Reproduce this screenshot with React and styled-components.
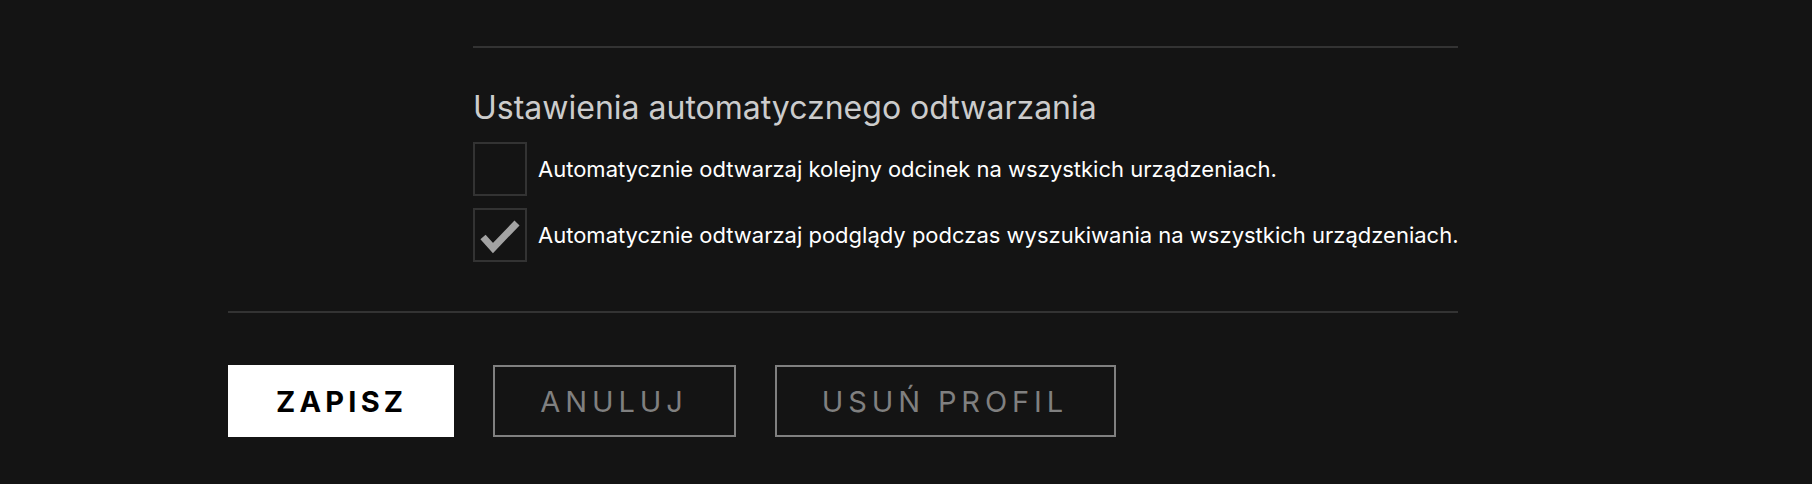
import React from "react";
import styled, { createGlobalStyle } from "styled-components";

const Global = createGlobalStyle`
  html, body { margin: 0; padding: 0; background: #141414; }
  body { font-family: Inter, "Noto Sans", sans-serif; color: #fff; }
`;

const Page = styled.div`
  width: 1812px;
  height: 484px;
  box-sizing: border-box;
  padding: 46px 0 0 228px;
  background: #141414;
`;

const Content = styled.div`
  width: 1230px;
`;

const Section = styled.section`
  margin-left: 245px;
  border-top: 2px solid #333;
  padding-top: 38px;
  padding-bottom: 49px;
`;

const Heading = styled.h2`
  margin: 0 0 12px;
  font-size: 32px;
  font-weight: 400;
  line-height: 44px;
  color: #ccc;
`;

const List = styled.div`
  display: flex;
  flex-direction: column;
  gap: 12px;
`;

const Row = styled.label`
  display: flex;
  align-items: center;
  gap: 11px;
`;

const Box = styled.span`
  width: 54px;
  height: 54px;
  box-sizing: border-box;
  border: 2px solid #333;
  display: flex;
  align-items: center;
  justify-content: center;
`;

const Label = styled.span`
  font-size: 22px;
  color: #fff;
  white-space: nowrap;
`;

const Divider = styled.hr`
  margin: 0;
  border: 0;
  border-top: 2px solid #333;
`;

const Buttons = styled.div`
  display: flex;
  gap: 39px;
  margin-top: 52px;
`;

const Button = styled.button`
  height: 72px;
  box-sizing: border-box;
  padding: ${(p) => (p.$primary ? "0 45px 0 46px" : "0 46px 0 45px")};
  font-family: Inter, "Noto Sans", sans-serif;
  font-size: 29px;
  line-height: 1;
  letter-spacing: ${(p) => (p.$primary ? 4.2 : 4.9)}px;
  text-transform: uppercase;
  font-weight: ${(p) => (p.$primary ? 700 : 400)};
  background: ${(p) => (p.$primary ? "#fff" : "transparent")};
  color: ${(p) => (p.$primary ? "#000" : "#808080")};
  border: 2px solid ${(p) => (p.$primary ? "#fff" : "#808080")};
`;

const Check = () => (
  <svg width="54" height="54" viewBox="0 0 54 54" style={{ margin: -2 }}>
    <polyline
      points="10,29 20,40 44,15"
      fill="none"
      stroke="#a3a3a3"
      strokeWidth="7"
      strokeLinejoin="miter"
    />
  </svg>
);

export default function App() {
  return (
    <>
      <Global />
      <Page>
        <Content>
          <Section>
            <Heading>Ustawienia automatycznego odtwarzania</Heading>
            <List>
              <Row>
                <Box />
                <Label>Automatycznie odtwarzaj kolejny odcinek na wszystkich urządzeniach.</Label>
              </Row>
              <Row>
                <Box>
                  <Check />
                </Box>
                <Label>Automatycznie odtwarzaj podglądy podczas wyszukiwania na wszystkich urządzeniach.</Label>
              </Row>
            </List>
          </Section>
          <Divider />
          <Buttons>
            <Button $primary>Zapisz</Button>
            <Button>Anuluj</Button>
            <Button>Usuń profil</Button>
          </Buttons>
        </Content>
      </Page>
    </>
  );
}
